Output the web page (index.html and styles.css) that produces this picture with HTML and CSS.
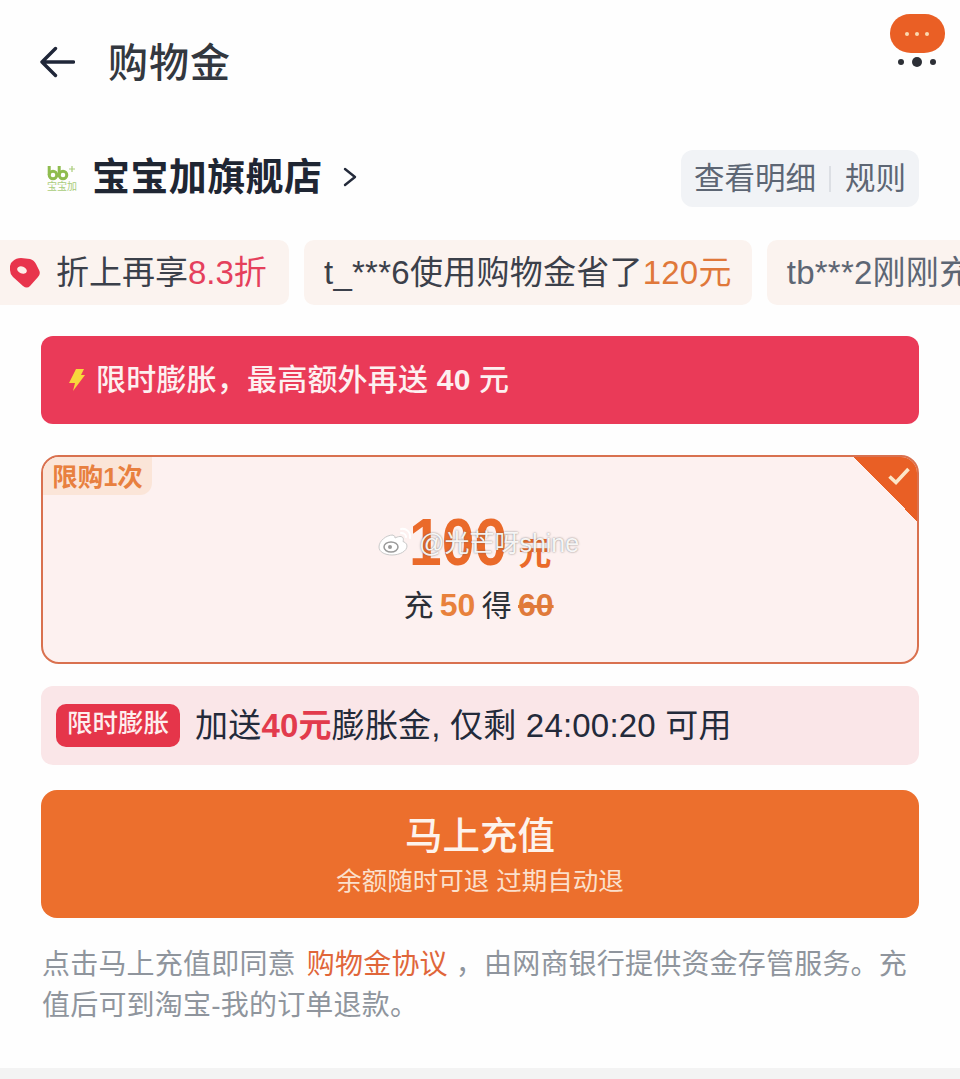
FILE: index.html
```html
<!DOCTYPE html>
<html lang="zh-CN">
<head>
    <meta charset="UTF-8">
    <meta name="viewport" content="width=device-width, initial-scale=1.0">
    <link rel="stylesheet" href="styles.css">
    <title>购物金</title>
</head>
<body>
<div class="page">
    <div class="top-bar">
        <svg class="back-icon" viewBox="0 0 36 32" width="36" height="32"><path d="M34.500 16H3M16.500 2.500 3 16l13.500 13.500" fill="none" stroke="#1f2638" stroke-width="3.400" stroke-linecap="round" stroke-linejoin="round"/></svg>
        <h1 class="page-title">购物金</h1>
        <div class="msg-menu">
            <div class="msg-bubble"><i></i><i></i><i></i></div>
            <div class="msg-dots"><i></i><i class="big"></i><i></i></div>
        </div>
    </div>

    <div class="shop-row">
        <div class="shop-logo">
            <svg viewBox="0 0 30 16" width="30" height="16"><g fill="none" stroke="#8fbc4f" stroke-width="3"><circle cx="6" cy="10" r="3.800"/><circle cx="16" cy="10" r="3.800"/><path d="M2.200 1v9M12.200 1v9"/></g><path d="M25 1v6M22 4h6" stroke="#a9cc7a" stroke-width="1.200"/></svg>
            <span>宝宝加</span>
        </div>
        <div class="shop-name">宝宝加旗舰店</div>
        <svg class="shop-arrow" viewBox="0 0 14 20" width="14" height="20"><path d="M2 2l10 8-10 8" fill="none" stroke="#232a3a" stroke-width="2.400" stroke-linecap="round" stroke-linejoin="round"/></svg>
        <div class="shop-links"><span>查看明细</span><i></i><span>规则</span></div>
    </div>

    <div class="ticker">
        <div class="chip chip-first">
            <svg viewBox="0 0 30 30" width="30" height="30"><path d="M3 3Q6 0 11 0L20 1Q24 2 26 6L29 12Q31 16 28 19L20 28Q17 31 13 28L3 19Q0 16 0 12L0 8Q0 5 3 3z" fill="#e8344c"/><ellipse cx="12" cy="12" rx="5" ry="3.500" fill="#fdeee8" transform="rotate(20 12 12)"/></svg>
            <span>折上再享<b class="red">8.3折</b></span>
        </div>
        <div class="chip chip-dark">t_***6使用购物金省了<b class="orange">120元</b></div>
        <div class="chip">tb***2刚刚充</div>
    </div>

    <div class="promo-banner">
        <svg viewBox="0 0 17 22" width="17" height="22"><path d="M8 0h8l-3 6h4L5 22l2-8H1z" fill="#f7d83c"/></svg>
        <span>限时膨胀，最高额外再送 <b>40</b> 元</span>
    </div>

    <div class="plan-card">
        <div class="plan-tag">限购1次</div>
        <div class="plan-corner"></div>
        <svg class="plan-check" viewBox="0 0 24 20" width="24" height="20"><path d="M2.500 10.500 9 16.500 21.500 3" fill="none" stroke="#fce6c8" stroke-width="3.600"/></svg>
        <div class="plan-amount"><span class="plan-digits">100</span><span class="plan-unit">元</span></div>
        <div class="plan-desc">充 <b>50</b> 得 <s>60</s></div>
    </div>

    <div class="boost-row">
        <span class="boost-badge">限时膨胀</span>
        <span class="boost-text">加送<b>40元</b>膨胀金, 仅剩 24:00:20 可用</span>
    </div>

    <div class="pay-button">
        <div class="pay-title">马上充值</div>
        <div class="pay-sub">余额随时可退 过期自动退</div>
    </div>

    <p class="agreement">点击马上充值即同意 <a>购物金协议</a> ，由网商银行提供资金存管服务。充值后可到淘宝-我的订单退款。</p>

    <div class="bottom-band"></div>

    <div class="watermark">
        <svg viewBox="0 0 36 30" width="36" height="30"><path d="M15 9C8 9 1 15 1 21c0 5 6 8 13 8 8 0 15-4 15-9 0-3-3-4-4-4.500 1-3 0-5-3-5-2 0-4 1-5 1.500 0-2-.5-2.500-2-2.500z" fill="#fff" stroke="#c9c9c9"/><ellipse cx="13" cy="21" rx="7" ry="5" fill="none" stroke="#9a9a9a" stroke-width="1.500"/><circle cx="12" cy="21" r="2" fill="#9a9a9a"/><path d="M23 3c5-1 10 3 9 9M23 7c3 0 5 2 5 4" fill="none" stroke="#fff" stroke-width="2" stroke-linecap="round"/></svg>
        <span>@光芒呀shine</span>
    </div>
</div>
</body>
</html>
```

FILE: styles.css
```css
* {box-sizing: border-box;}
html, body {margin: 0; padding: 0;}
body {background-color: #fefefe; font-family: "Liberation Sans", "Noto Sans CJK SC", sans-serif; color: #232a3a;}
.page {position: relative; width: 960px; height: 1079px; overflow: hidden; padding: 0 41px;}

/* top bar */
.top-bar {display: flex; align-items: center; height: 125px; padding-bottom: 2px;}
.back-icon {flex: none; margin-left: -2px;}
.page-title {margin: 0 0 4px 33px; font-size: 40px; font-weight: 500; letter-spacing: 1px; color: #33383f;}
.msg-menu {margin: -42px -26px 0 auto; width: 56px; display: flex; flex-direction: column; align-items: center;}
.msg-bubble {width: 55px; height: 39px; border-radius: 20px 20px 21px 21px / 19px; background-color: #ea5f25; display: flex; align-items: center; justify-content: center; gap: 6px;}
.msg-bubble i {width: 4px; height: 4px; background-color: #fbd9b0; border-radius: 50%;}
.msg-dots {display: flex; align-items: center; gap: 8px; margin-top: 4px;}
.msg-dots i {width: 6px; height: 6px; background-color: #2c2f36; border-radius: 50%;}
.msg-dots i.big {width: 10px; height: 10px;}

/* shop */
.shop-row {display: flex; align-items: center; height: 57px; margin-top: 25px;}
.shop-logo {width: 30px; margin-left: 6px; display: flex; flex-direction: column; align-items: center;}
.shop-logo span {font-size: 10px; line-height: 12px; color: #a9cc7a; white-space: nowrap;}
.shop-name {margin: 0 0 10px 15px; font-size: 38px; font-weight: 700; letter-spacing: 0.400px; color: #1f2633;}
.shop-arrow {margin: 0 0 4px 21px;}
.shop-links {margin-left: auto; width: 238px; height: 57px; padding: 0 0 6px 13px; border-radius: 12px; background-color: #f1f3f6; display: flex; align-items: center; font-size: 30.500px; color: #5d6674;}
.shop-links i {width: 2px; height: 26px; margin: 6px 14px 0 13px; background-color: #dcdfe4;}

/* ticker */
.ticker {display: flex; gap: 15px; margin: 33px -41px 0 -51px; white-space: nowrap; font-size: 33px;}
.chip {flex: none; display: flex; align-items: center; height: 65px; padding: 0 20px 6px; border-radius: 10px; background-color: #fbf3ef; color: #5d6674; letter-spacing: 0.25px;}
.chip-first {padding-left: 20px; width: 299px; color: #3b404a; letter-spacing: 0;}
.chip-first svg {margin: 6px 16px 0 0;}
.chip-dark {color: #3b404a;}
.chip b {font-weight: 400;}
.red {color: #e5405c;}
.orange {color: #e0783a;}

/* banner */
.promo-banner {display: flex; align-items: center; gap: 11px; height: 88px; margin-top: 31px; padding-left: 27px; border-radius: 12px; background-color: #ea3a58; color: #fdf0f0; font-size: 30px; font-weight: 500; letter-spacing: 0.200px;}
.promo-banner span {margin-bottom: 6px;}
.promo-banner b {font-weight: 700;}

/* plan */
.plan-card {position: relative; height: 209px; margin-top: 31px; border: 2px solid #d9714f; border-radius: 18px; background-color: #fdf1f0; overflow: hidden; text-align: center;}
.plan-tag {position: absolute; left: 0; top: 0; width: 109px; height: 38px; border-radius: 0 0 12px 0; background-color: #fbe5d8; color: #e8803f; font-size: 25.500px; font-weight: 700; line-height: 40px; text-align: center;}
.plan-corner {position: absolute; right: 0; top: 0; width: 64px; height: 64px; background: linear-gradient(to top right, transparent 50%, #e95f25 50%);}
.plan-check {position: absolute; right: 6px; top: 9px;}
.plan-amount {display: flex; justify-content: center; align-items: baseline; height: 72px; margin-top: 49px; line-height: 72px; font-weight: 700; color: #ea6a2a;}
.plan-digits {display: inline-block; margin: 0 -5px; font-size: 66px; transform: scaleX(0.89);}
.plan-unit {margin-left: 10px; font-size: 33px;}
.plan-desc {margin-top: 7px; padding-right: 3px; font-size: 30px; line-height: 40px; word-spacing: -2px; color: #2b2f36;}
.plan-desc b {font-size: 32px; font-weight: 700; color: #e8813c;}
.plan-desc s {font-size: 32px; font-weight: 700; color: #e07a3a;}

/* boost */
.boost-row {display: flex; align-items: center; height: 79px; margin-top: 22px; padding-left: 15px; border-radius: 12px; background-color: #fae6e8;}
.boost-badge {width: 124px; height: 43px; border-radius: 10px; background-color: #e5354a; color: #fdeeee; font-size: 25.500px; font-weight: 500; line-height: 39px; text-align: center;}
.boost-text {margin: 0 0 6px 15px; font-size: 33px; letter-spacing: 0.200px; color: #232a3a;}
.boost-text b {color: #e23b4c; font-weight: 700;}

/* button */
.pay-button {height: 128px; margin-top: 25px; border-radius: 16px; background-color: #ec6f2d; color: #fff; text-align: center; padding-top: 22px;}
.pay-title {font-size: 37.500px; line-height: 48px; font-weight: 500; color: #fdf3ec;}
.pay-sub {margin-top: 3px; font-size: 25.500px; line-height: 36px; color: #fbe0cc;}

/* footer */
.agreement {margin: 27px 0 0 1px; width: 880px; font-size: 28px; line-height: 40.500px; letter-spacing: 0.200px; color: #8f959d;}
.agreement a {margin-left: 3px; color: #e0663a;}
.bottom-band {position: absolute; left: 0; right: 0; bottom: 0; height: 11px; background-color: #f3f3f3;}

/* picture watermark */
.watermark {position: absolute; left: 378px; top: 523px; display: flex; align-items: center; gap: 5px; color: rgba(255,255,255,0.92); font-size: 25px; text-shadow: 0 0 2px rgba(90,90,90,0.8);}
```
